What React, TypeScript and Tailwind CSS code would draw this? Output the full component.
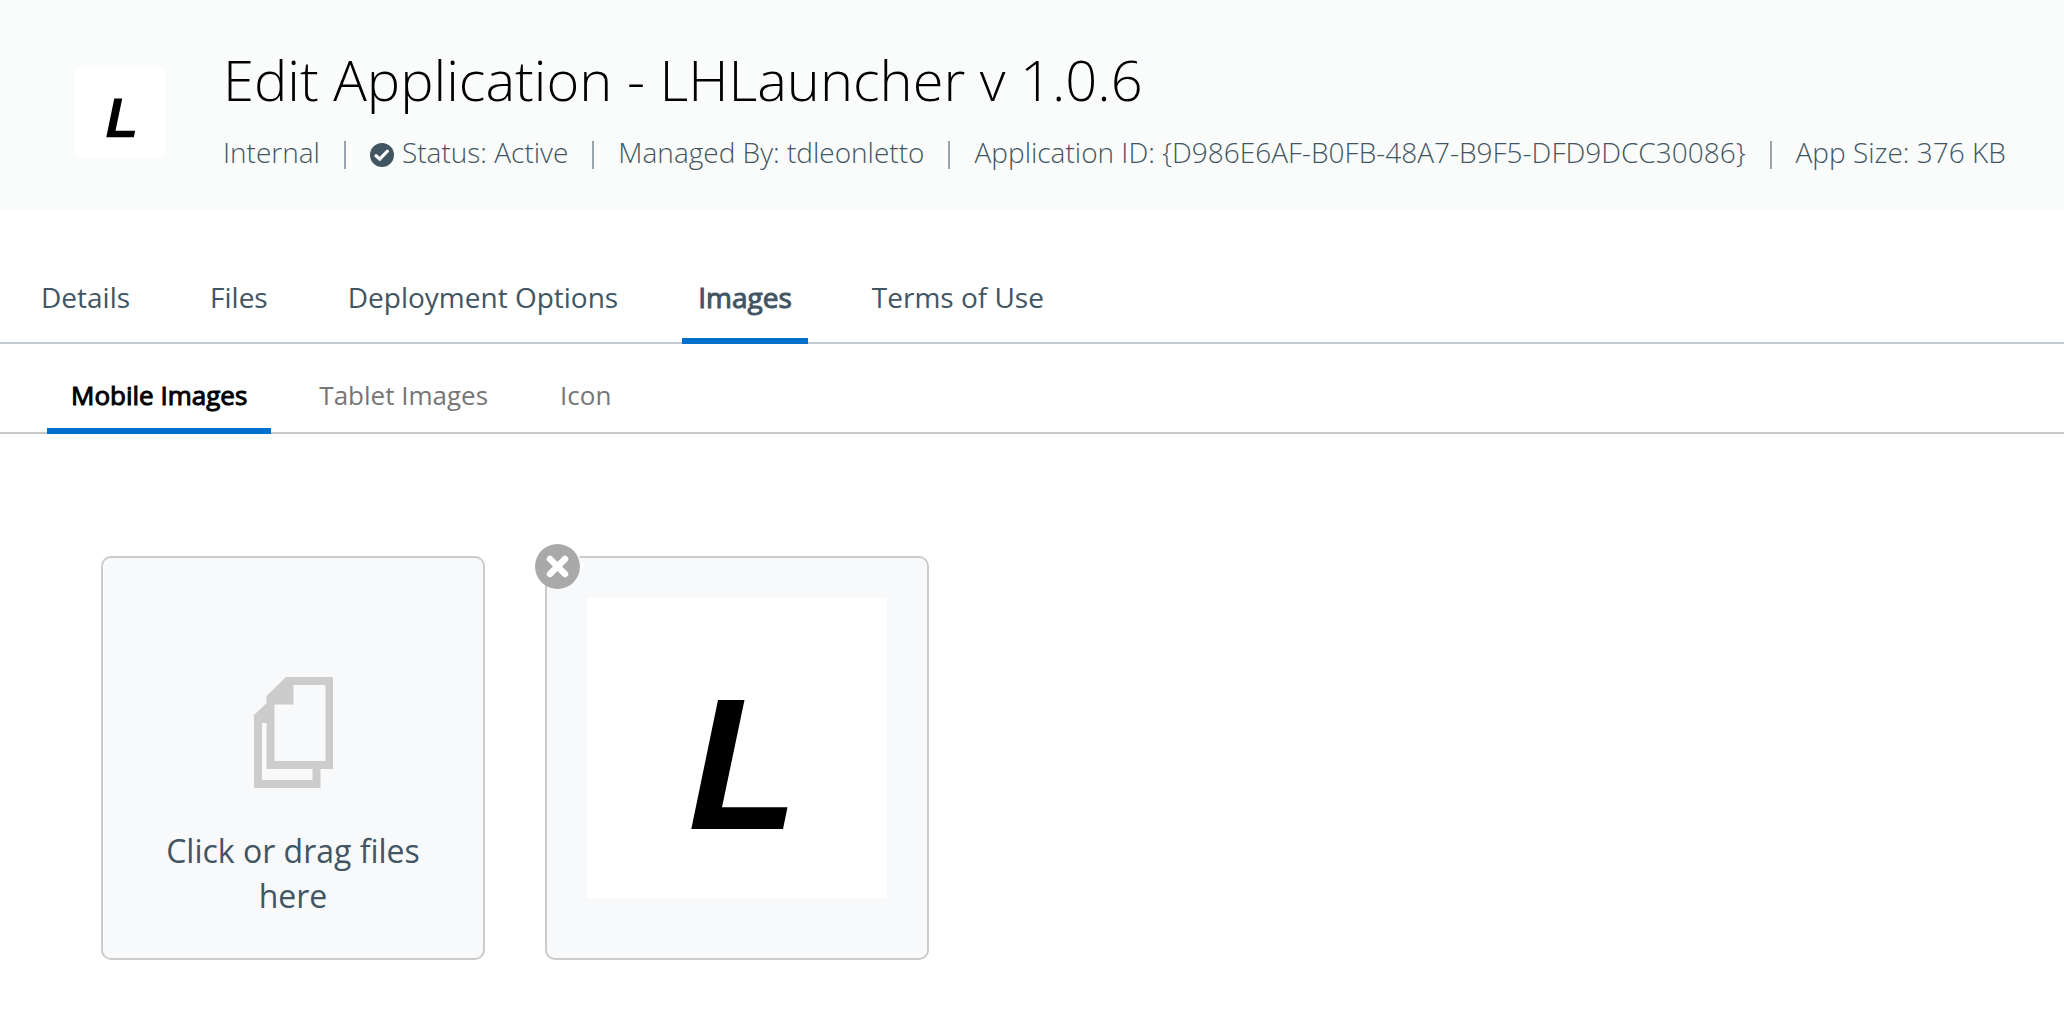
import React from "react";

function LauncherLogo({ className }: { className: string }) {
  return (
    <svg viewBox="0 0 300 300" className={className} role="img" aria-label="LHLauncher icon">
      <path fill="#000" d="M131 102H157.5L135 209.3H200.5L196 231H104.3Z" />
    </svg>
  );
}

function FilesIcon() {
  return (
    <svg viewBox="0 0 79 111" className="h-[111px] w-[79px] fill-[#cccccc]" aria-hidden="true">
      <path
        fillRule="evenodd"
        d="M32 0H79V92H66.500V111H0V38L12.500 26V19ZM39.500 8V27.500H20.500V84H71.500V8ZM12.500 46H8V103H58.500V92H12.500Z"
      />
    </svg>
  );
}

function CheckBadge() {
  return (
    <svg viewBox="0 0 24 24" className="mt-[5px] size-[24px]" aria-hidden="true">
      <circle cx="12" cy="12" r="12" fill="#425563" />
      <path
        d="M6 12.700L9.800 16L17.400 8.200"
        fill="none"
        stroke="#fff"
        strokeWidth="3.200"
        strokeLinecap="round"
      />
    </svg>
  );
}

function CloseBadge() {
  return (
    <svg viewBox="0 0 51 45" className="h-[45px] w-[51px]" aria-hidden="true">
      <path d="M40 8L50.300 20L42 30Z" fill="#fff" />
      <circle cx="22.500" cy="22.500" r="22.500" fill="#a9a9a9" />
      <path
        d="M15 15L30 30M30 15L15 30"
        fill="none"
        stroke="#fff"
        strokeWidth="6.500"
        strokeLinecap="round"
      />
    </svg>
  );
}

function Separator() {
  return <span className="mx-[24px] mt-[6px] h-[28px] w-[2px] bg-[#98a4ac]" />;
}

const tabs = ["Details", "Files", "Deployment Options", "Images", "Terms of Use"];
const subTabs = ["Mobile Images", "Tablet Images", "Icon"];

export default function App() {
  return (
    <div className="min-h-screen bg-white font-['Open_Sans',sans-serif] text-[#425563]">
      <header className="flex items-start bg-[#fafcfb] pt-[41px] pr-[24px] pb-[38px] pl-[75px]">
        <LauncherLogo className="mt-[27px] size-[90px] shrink-0 bg-white" />
        <div className="ml-[58px] whitespace-nowrap">
          <h1 className="text-[56px] leading-[76px] font-light text-black">
            Edit Application - LHLauncher v 1.0.6
          </h1>
          <div className="mt-[15px] flex items-center text-[28px] leading-[40px] font-light">
            <span>Internal</span>
            <Separator />
            <span className="flex items-center gap-2">
              <CheckBadge />
              Status: Active
            </span>
            <Separator />
            <span>Managed By: tdleonletto</span>
            <Separator />
            <span>Application ID: {"{D986E6AF-B0FB-48A7-B9F5-DFD9DCC30086}"}</span>
            <Separator />
            <span>App Size: 376 KB</span>
          </div>
        </div>
      </header>

      <nav
        aria-label="Application sections"
        className="mt-[62px] flex gap-[48px] border-b-2 border-[#c3cdd1] pl-[25px] text-[28px] leading-[40px]"
      >
        {tabs.map((t) => (
          <button
            key={t}
            type="button"
            aria-current={t === "Images" ? "page" : undefined}
            className={
              t === "Images"
                ? "-mb-[2px] border-b-6 border-[#0070ce] px-4 pt-[5px] pb-[21px] [-webkit-text-stroke:1px_#425563]"
                : "-mb-[2px] border-b-6 border-transparent px-4 pt-[5px] pb-[21px]"
            }
          >
            {t}
          </button>
        ))}
      </nav>

      <nav
        aria-label="Image types"
        className="flex gap-6 border-b-2 border-[#c8c8c8] pl-[47px] text-[26px] leading-[40px] text-[#767676]"
      >
        {subTabs.map((t) => (
          <button
            key={t}
            type="button"
            aria-current={t === "Mobile Images" ? "page" : undefined}
            className={
              t === "Mobile Images"
                ? "-mb-[2px] border-b-6 border-[#0070ce] px-6 pt-[31px] pb-[13px] text-black [-webkit-text-stroke:1px_#000000]"
                : "-mb-[2px] border-b-6 border-transparent px-6 pt-[31px] pb-[13px]"
            }
          >
            {t}
          </button>
        ))}
      </nav>

      <main className="flex gap-[60px] pt-[122px] pl-[101px]">
        <button
          type="button"
          className="flex h-[404px] w-[384px] flex-col items-center justify-end rounded-[10px] border-2 border-[#cbcbcb] bg-[#f8f9fb] px-[40px] pb-[40px] text-[32px] leading-[45px]"
        >
          <FilesIcon />
          <span className="mt-[40px]">Click or drag files here</span>
        </button>
        <div className="relative h-[404px] w-[384px] rounded-[10px] border-2 border-[#cbcbcb] bg-[#f8f9fb] p-[40px]">
          <LauncherLogo className="size-[300px] bg-white" />
          <button
            type="button"
            aria-label="Remove image"
            className="absolute -top-[14px] -left-[12px]"
          >
            <CloseBadge />
          </button>
        </div>
      </main>
    </div>
  );
}
